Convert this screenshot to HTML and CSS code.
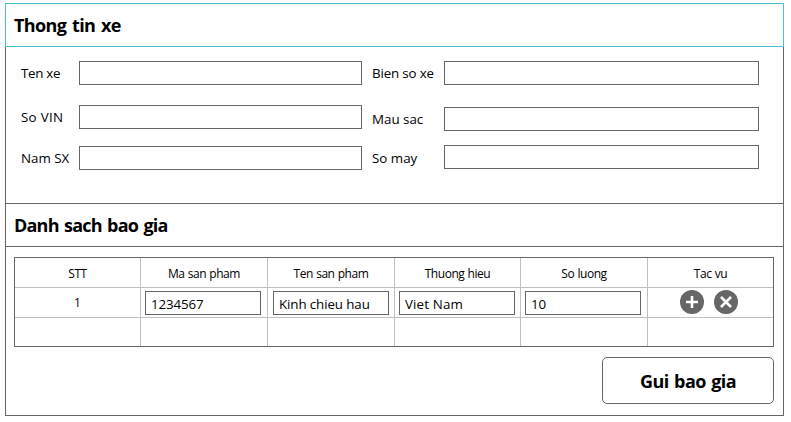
FILE: index.html
```html
<!DOCTYPE html>
<html lang="vi">
<head>
<meta charset="utf-8">
<title>Thong tin xe</title>
<link rel="stylesheet" href="styles.css">
</head>
<body>
<main class="panel">
  <h2 class="heading heading-active">Thong tin xe</h2>
  <section class="vehicle">
    <div class="fields fields-left">
      <label class="field"><span class="name name-tight">Ten xe</span><input type="text"></label>
      <label class="field"><span class="name name-wide">So VIN</span><input type="text"></label>
      <label class="field"><span class="name">Nam SX</span><input type="text"></label>
    </div>
    <div class="fields fields-right">
      <label class="field"><span class="name name-snug">Bien so xe</span><input type="text"></label>
      <label class="field"><span class="name">Mau sac</span><input type="text"></label>
      <label class="field"><span class="name name-low">So may</span><input type="text"></label>
    </div>
  </section>
  <h2 class="heading heading-list">Danh sach bao gia</h2>
  <section class="quote">
    <div class="table">
      <div class="cell head">STT</div><div class="cell head">Ma san pham</div><div class="cell head">Ten san pham</div><div class="cell head">Thuong hieu</div><div class="cell head">So luong</div><div class="cell head">Tac vu</div>
      <div class="cell">1</div>
      <div class="cell entry"><input type="text" value="1234567"></div>
      <div class="cell entry entry-wide"><input type="text" value="Kinh chieu hau"></div>
      <div class="cell entry entry-brand"><input type="text" value="Viet Nam"></div>
      <div class="cell entry"><input type="text" value="10"></div>
      <div class="cell actions">
        <svg width="24" height="24" viewBox="0 0 24 24"><circle cx="12" cy="12" r="12" fill="#666"/><path d="M12 6v12M6 12h12" stroke="#fff" stroke-width="2.6"/></svg>
        <svg width="24" height="24" viewBox="0 0 24 24"><circle cx="12" cy="12" r="12" fill="#666"/><path d="M7 7l10 10M17 7L7 17" stroke="#fff" stroke-width="2.5"/></svg>
      </div>
      <div class="cell"></div><div class="cell"></div><div class="cell"></div><div class="cell"></div><div class="cell"></div><div class="cell"></div>
    </div>
    <button class="submit" type="button">Gui bao gia</button>
  </section>
</main>
</body>
</html>
```
FILE: styles.css
```css
* { box-sizing: border-box; }
body {
  margin: 0;
  padding: 3px 0 0 5px;
  background: #fff;
  color: #000;
  font-family: "Open Sans", "Noto Sans", sans-serif;
  font-size: 13.33px;
}
.panel {
  width: 779px;
  height: 413px;
  border: 1px solid #666;
}
.heading {
  margin: 0 -1px;
  height: 44px;
  padding-left: 8px;
  border: 1px solid #666;
  font-size: 18px;
  font-weight: 700;
  line-height: 42px;
  letter-spacing: -0.6px;
  word-spacing: 1.5px;
}
.heading-active {
  margin-top: -1px;
  border-color: #48c6d4;
}
.heading-list { letter-spacing: -0.8px; }
.vehicle {
  display: flex;
  gap: 10px;
  height: 156px;
  padding: 14px 0 0 15px;
}
.fields { display: grid; align-content: start; }
.fields-left { grid-template-rows: 44px 41px 24px; }
.fields-right { grid-template-rows: 46px 38px 24px; }
.field {
  display: grid;
  grid-template-columns: 58px 283px;
  height: 24px;
}
.fields-right .field { grid-template-columns: 72px 315px; }
.name { line-height: 24px; white-space: nowrap; }
.name-tight { letter-spacing: -0.3px; }
.name-snug { letter-spacing: -0.15px; }
.name-wide { letter-spacing: 0.3px; }
.name-low { padding-top: 1px; }
input {
  width: 100%;
  height: 24px;
  margin: 0;
  padding: 2px 0 0 5px;
  border: 1px solid #666;
  border-radius: 0;
  background: #fff;
  color: #000;
  font: inherit;
  outline: 0;
}
.quote {
  display: flex;
  flex-direction: column;
  gap: 10px;
  padding: 10px 9px 0 8px;
}
.table {
  display: grid;
  grid-template-columns: 126px 127px 127px 126px 127px 125px;
  grid-template-rows: 30px 30px 28px;
  width: 760px;
  border: 1px solid #666;
}
.cell {
  display: flex;
  align-items: center;
  justify-content: center;
  border-right: 1px solid #c0c0c0;
  border-bottom: 1px solid #c0c0c0;
  font-size: 12px;
}
.head { padding-top: 1px; letter-spacing: -0.45px; word-spacing: 0.5px; }
.cell:nth-child(6n) { border-right: 0; }
.cell:nth-child(n+13) { border-bottom: 0; }
.entry { align-items: flex-start; justify-content: flex-start; padding: 3px 0 0 4px; font-size: 13.33px; }
.entry-wide { padding-left: 5px; }
.entry input { width: 116px; letter-spacing: -0.1px; }
.entry-brand input { letter-spacing: 0.15px; }
.actions { align-items: flex-start; gap: 10px; padding: 2px 3px 0 0; }
.submit {
  align-self: flex-end;
  width: 172px;
  height: 47px;
  margin: 0;
  padding: 1px 0 0;
  border: 1px solid #666;
  border-radius: 5px;
  background: #fff;
  color: #000;
  font: 700 18px "Open Sans", "Noto Sans", sans-serif;
  letter-spacing: -0.6px;
  word-spacing: 1.5px;
}
```
